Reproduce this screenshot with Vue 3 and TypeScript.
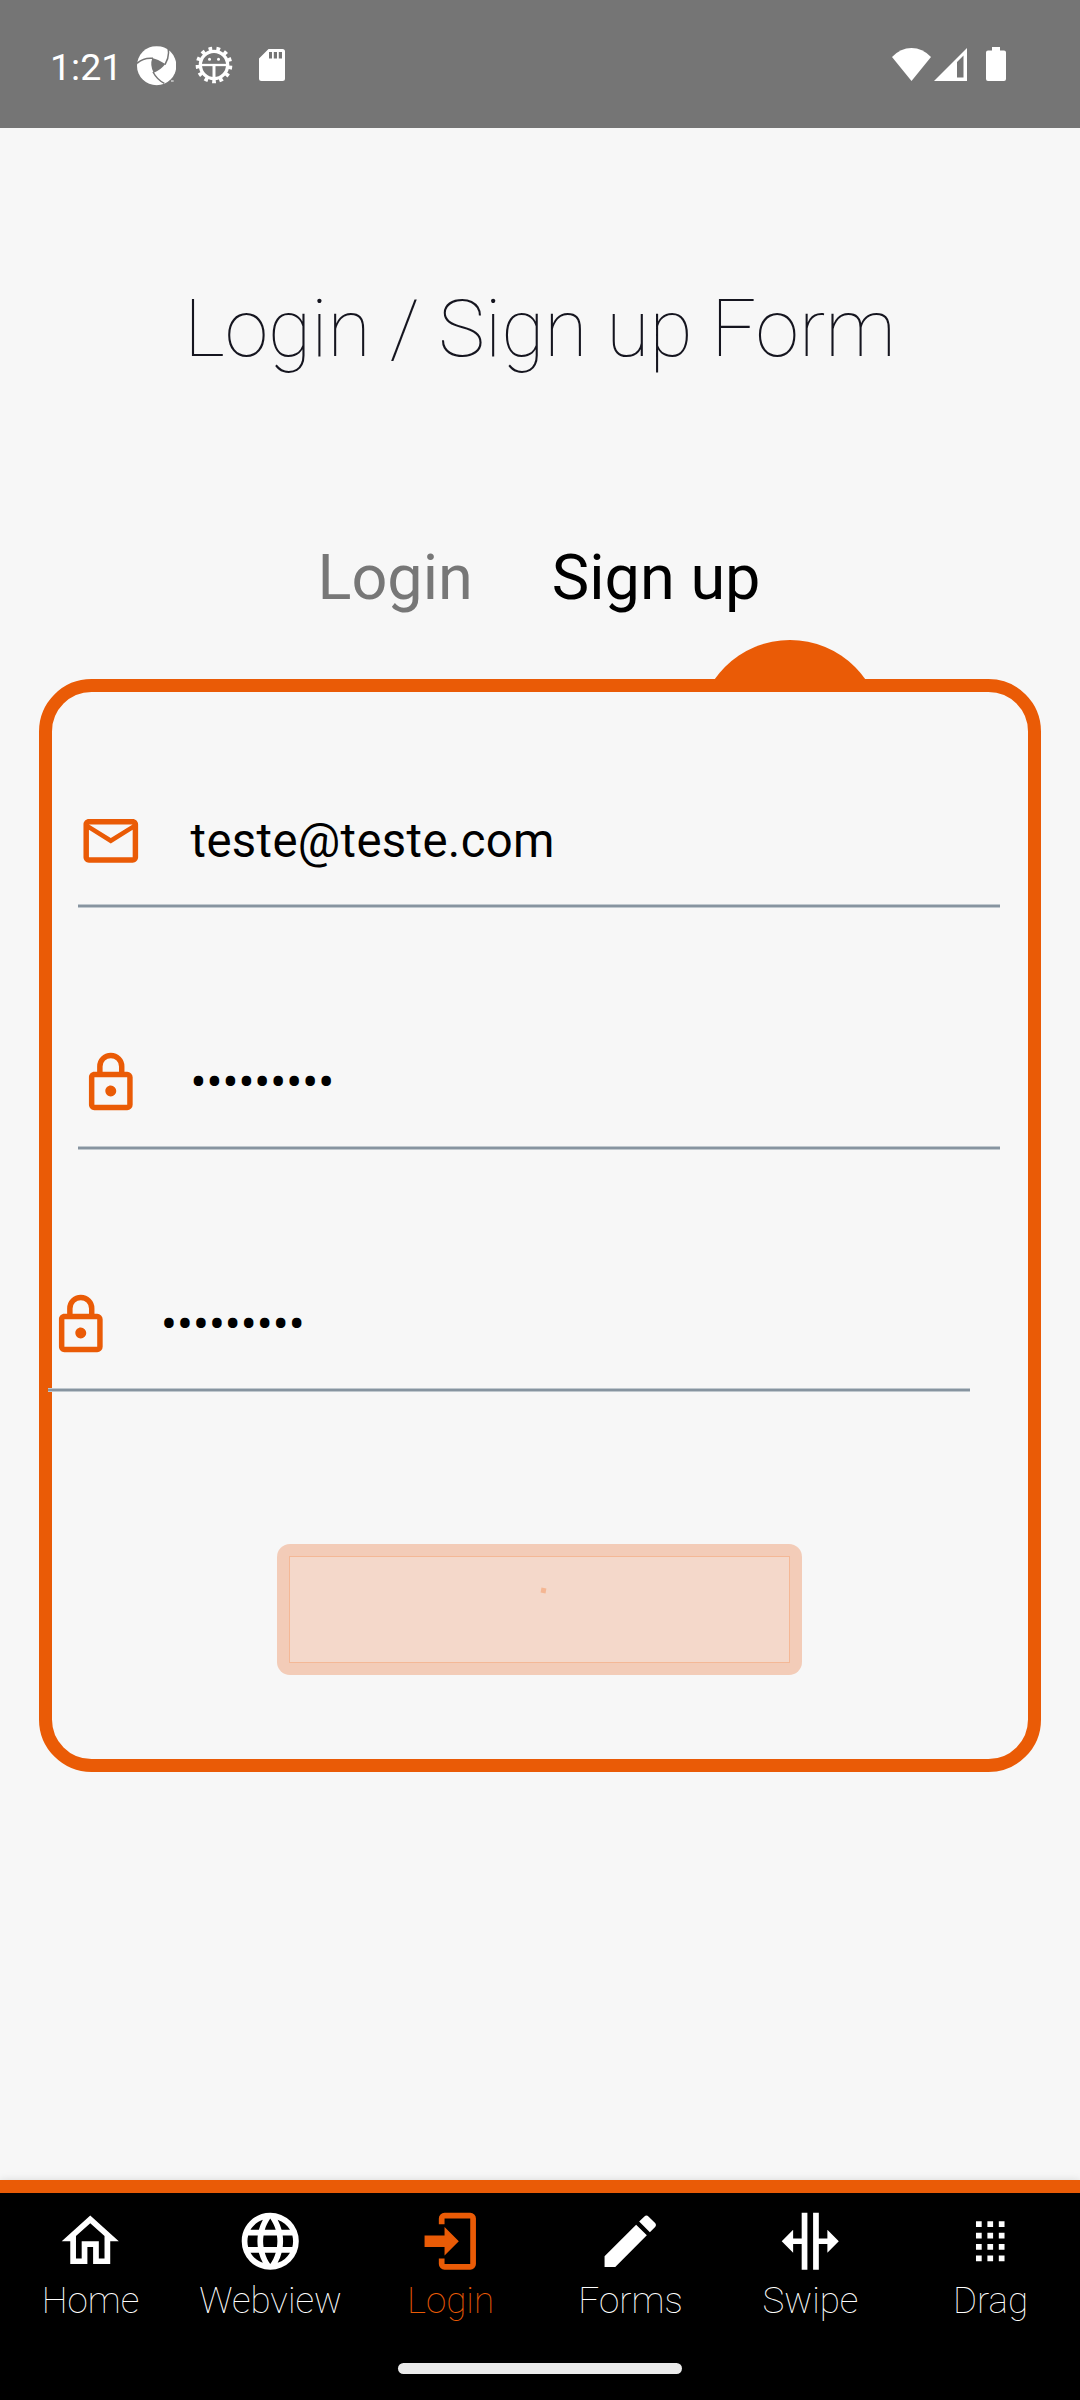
<script setup lang="ts">
import { ref } from 'vue'

interface Field {
  id: string
  icon: 'mail' | 'lock'
  value: string
  shifted: boolean
}

interface NavItem {
  label: string
  path: string
}

const mail =
  'M22 6C22 4.9 21.1 4 20 4H4C2.9 4 2 4.9 2 6V18C2 19.1 2.9 20 4 20H20C21.1 20 22 19.1 22 18V6M20 6L12 11L4 6H20M20 18H4V8L12 13L20 8V18Z'
const lock =
  'M12 17C10.89 17 10 16.1 10 15C10 13.89 10.89 13 12 13A2 2 0 0 1 14 15A2 2 0 0 1 12 17M18 20V10H6V20H18M18 8A2 2 0 0 1 20 10V20A2 2 0 0 1 18 22H6C4.89 22 4 21.1 4 20V10C4 8.89 4.89 8 6 8H7V6A5 5 0 0 1 12 1A5 5 0 0 1 17 6V8H18M12 3A3 3 0 0 0 9 6V8H15V6A3 3 0 0 0 12 3Z'

const fields: Field[] = [
  { id: 'email', icon: 'mail', value: 'teste@teste.com', shifted: false },
  { id: 'password', icon: 'lock', value: '•••••••••', shifted: false },
  { id: 'repeat', icon: 'lock', value: '•••••••••', shifted: true },
]

const navItems: NavItem[] = [
  {
    label: 'Home',
    path: 'M12 5.69L17 10.19V18H15V12H9V18H7V10.19L12 5.69M12 3L2 12H5V20H11V14H13V20H19V12H22',
  },
  {
    label: 'Webview',
    path: 'M16.36 14C16.44 13.34 16.5 12.68 16.5 12C16.5 11.32 16.44 10.66 16.36 10H19.74C19.9 10.64 20 11.31 20 12C20 12.69 19.9 13.36 19.74 14M14.59 19.56C15.19 18.45 15.65 17.25 15.97 16H18.92C17.96 17.65 16.43 18.93 14.59 19.56M14.34 14H9.66C9.56 13.34 9.5 12.68 9.5 12C9.5 11.32 9.56 10.65 9.66 10H14.34C14.43 10.65 14.5 11.32 14.5 12C14.5 12.68 14.43 13.34 14.34 14M12 19.96C11.17 18.76 10.5 17.43 10.09 16H13.91C13.5 17.43 12.83 18.76 12 19.96M8 8H5.08C6.03 6.34 7.57 5.06 9.4 4.44C8.8 5.55 8.35 6.75 8 8M5.08 16H8C8.35 17.25 8.8 18.45 9.4 19.56C7.57 18.93 6.03 17.65 5.08 16M4.26 14C4.1 13.36 4 12.69 4 12C4 11.31 4.1 10.64 4.26 10H7.64C7.56 10.66 7.5 11.32 7.5 12C7.5 12.68 7.56 13.34 7.64 14M12 4.03C12.83 5.23 13.5 6.57 13.91 8H10.09C10.5 6.57 11.17 5.23 12 4.03M18.92 8H15.97C15.65 6.75 15.19 5.55 14.59 4.44C16.43 5.07 17.96 6.34 18.92 8M12 2C6.47 2 2 6.5 2 12A10 10 0 0 0 12 22A10 10 0 0 0 22 12A10 10 0 0 0 12 2Z',
  },
  {
    label: 'Login',
    path: 'M10 17V14H3V10H10V7L15 12L10 17M10 2H19A2 2 0 0 1 21 4V20A2 2 0 0 1 19 22H10A2 2 0 0 1 8 20V18H10V20H19V4H10V6H8V4A2 2 0 0 1 10 2Z',
  },
  {
    label: 'Forms',
    path: 'M20.71 7.04C21.1 6.65 21.1 6 20.71 5.63L18.37 3.29C18 2.9 17.35 2.9 16.96 3.29L15.12 5.12L18.87 8.87M3 17.25V21H6.75L17.81 9.93L14.06 6.18L3 17.25Z',
  },
  {
    label: 'Swipe',
    path: 'M9 2H11V22H9V13H6V16L2 12L6 8V11H9V2M13 2H15V11H18V8L22 12L18 16V13H15V22H13V2Z',
  },
  {
    label: 'Drag',
    path: 'M7 5h2v2H7zM11 5h2v2h-2zM15 5h2v2h-2zM7 9h2v2H7zM11 9h2v2h-2zM15 9h2v2h-2zM7 13h2v2H7zM11 13h2v2h-2zM15 13h2v2h-2zM7 17h2v2H7zM11 17h2v2h-2zM15 17h2v2h-2z',
  },
]

const activeNav = ref('Login')
const activeTab = ref('Sign up')
</script>

<template>
  <div class="screen">
    <header class="status">
      <div class="status-left">
        <span class="clock">1:21</span>
        <svg class="swirl" viewBox="408 137 120 120">
          <defs>
            <clipPath id="swirl-clip"><rect x="408" y="138" width="117" height="118" /></clipPath>
          </defs>
          <circle cx="467" cy="196" r="59" fill="#fff" clip-path="url(#swirl-clip)" />
          <path d="M454 173Q475 178 493 191Q478 210 458 217Q446 195 454 173Z" fill="#757575" />
          <path
            d="M408 189Q428 171 456 174M500 140Q508 166 492 193M456 215Q468 238 490 249"
            fill="none"
            stroke="#757575"
            stroke-width="4.5"
          />
          <path d="M510 242h8" stroke="#fff" stroke-width="3" />
        </svg>
        <svg class="gear" viewBox="-60 -60 120 120" fill="none" stroke="#fff">
          <circle r="41" stroke-width="10" />
          <circle
            r="49"
            stroke-width="12"
            stroke-dasharray="11 12.683"
            transform="rotate(83.57)"
          />
          <path d="M-40 0H40" stroke-width="7" />
          <path d="M0 0V40" stroke-width="9" />
          <circle cx="-13.500" cy="-17" r="4.500" fill="#fff" stroke="none" />
          <circle cx="13.500" cy="-17" r="4.500" fill="#fff" stroke="none" />
        </svg>
        <svg class="sd" viewBox="0 0 26 32">
          <path
            fill="#fff"
            fill-rule="evenodd"
            d="M9.500 0H23.500A2.500 2.500 0 0 1 26 2.500V29.500A2.500 2.500 0 0 1 23.500 32H2.500A2.500 2.500 0 0 1 0 29.500V9.500ZM10 3V9.500H13V3ZM14.800 3V9.500H18V3ZM19.800 3V9.500H23V3Z"
          />
        </svg>
      </div>
      <div class="status-right">
        <svg class="wifi" viewBox="0 0 39 33">
          <path fill="#fff" d="M0 9Q8.500 0 19.500 0T39 9L19.500 33Z" />
        </svg>
        <svg class="signal" viewBox="0 0 33 33">
          <path fill="#fff" fill-rule="evenodd" d="M0 33L33 0V33ZM23 14V29.500H29.500V7.500Z" />
        </svg>
        <svg class="battery" viewBox="0 0 20 34">
          <path
            fill="#fff"
            d="M6 0H14V3.500H18A2 2 0 0 1 20 5.500V32A2 2 0 0 1 18 34H2A2 2 0 0 1 0 32V5.500A2 2 0 0 1 2 3.500H6Z"
          />
        </svg>
      </div>
    </header>

    <main class="content">
      <h1 class="title">Login / Sign up Form</h1>

      <div class="tabs">
        <button
          v-for="tab in ['Login', 'Sign up']"
          :key="tab"
          class="tab"
          :class="{ active: activeTab === tab }"
          @click="activeTab = tab"
        >
          {{ tab }}
        </button>
      </div>

      <section class="card">
        <div class="bump"><div class="bump-circle"></div></div>
        <div v-for="field in fields" :key="field.id" class="field" :class="{ shifted: field.shifted }">
          <svg class="field-icon" viewBox="0 0 24 24">
            <path :d="field.icon === 'mail' ? mail : lock" />
          </svg>
          <span class="field-value" :class="field.icon">{{ field.value }}</span>
        </div>
        <div class="submit">
          <div class="submit-inner"><span class="speck"></span></div>
        </div>
      </section>
    </main>

    <nav class="nav">
      <div class="nav-items">
        <a
          v-for="item in navItems"
          :key="item.label"
          class="nav-item"
          :class="{ active: activeNav === item.label }"
          @click="activeNav = item.label"
        >
          <svg class="nav-icon" viewBox="0 0 24 24"><path :d="item.path" /></svg>
          <span class="nav-label">{{ item.label }}</span>
        </a>
      </div>
      <div class="handle"></div>
    </nav>
  </div>
</template>

<style>
body {
  margin: 0;
  background: #f7f7f7;
}
</style>

<style scoped>
* {
  box-sizing: border-box;
}

.screen {
  display: flex;
  flex-direction: column;
  width: 1080px;
  height: 2400px;
  overflow: hidden;
  background: #f7f7f7;
  font-family: Roboto, 'Liberation Sans', sans-serif;
}

svg {
  display: block;
  flex: none;
}

.status {
  display: flex;
  justify-content: space-between;
  height: 128px;
  padding: 0 74px 0 50px;
  background: #757575;
}

.status-left,
.status-right {
  display: flex;
  align-items: center;
}

.clock {
  width: 87px;
  padding-top: 5px;
  color: #fff;
  font-size: 37.500px;
  line-height: 44px;
}

.swirl {
  width: 40px;
  height: 40px;
  margin-top: 3px;
}

.gear {
  width: 40px;
  height: 40px;
  margin: 2px 0 0 17px;
}

.sd {
  width: 26px;
  height: 32px;
  margin: 2px 0 0 25px;
}

.wifi {
  width: 39px;
  height: 33px;
  margin-right: 3px;
}

.signal {
  width: 33px;
  height: 33px;
  margin-right: 19px;
}

.battery {
  width: 20px;
  height: 34px;
}

.content {
  display: flex;
  flex: 1;
  flex-direction: column;
  align-items: center;
}

.title {
  margin: 155px 0 0;
  color: #15151f;
  font-size: 78.750px;
  font-weight: 100;
  line-height: 92px;
  white-space: nowrap;
}

.tabs {
  display: flex;
  gap: 79px;
  margin: 166px 2px 0 0;
}

.tab {
  padding: 0;
  border: 0;
  background: none;
  color: #777;
  font-family: inherit;
  font-size: 63px;
  line-height: 74px;
}

.tab.active {
  color: #000;
}

.card {
  position: relative;
  width: 1002px;
  height: 1093px;
  margin-top: 64px;
  padding: 80px 26px 0;
  border: 13px solid #ea5b06;
  border-radius: 52.500px;
}

.bump {
  position: absolute;
  top: -52px;
  left: 646px;
  width: 184px;
  height: 40px;
  overflow: hidden;
}

.bump-circle {
  width: 184px;
  height: 184px;
  border-radius: 50%;
  background: #ea5b06;
}

.field {
  position: relative;
  display: flex;
  align-items: center;
  width: 922px;
  height: 136px;
  margin-bottom: 106px;
  padding-top: 2px;
  background: linear-gradient(#c0c8ce 1px, #8794a0 1px, #8794a0 3px, #c0c8ce 3px) bottom / 100% 4px
    no-repeat;
}

.field.shifted {
  left: -30.500px;
}

.field-icon {
  width: 65.600px;
  height: 65.600px;
  fill: #ea5b06;
}

.field-value {
  margin-left: 47px;
  font-size: 47.250px;
  line-height: 56px;
}

.field-value.mail {
  letter-spacing: 0.36px;
}

.shifted .field-value {
  margin-left: 48px;
}

.submit {
  width: 525px;
  height: 131px;
  margin: 152px 0 0 199px;
  padding: 12px;
  border-radius: 13px;
  background: #f3ccb8;
}

.submit-inner {
  height: 107px;
  padding: 31px 0 0 251px;
  border: 1px solid #f4b896;
  background: #f4d8ca;
}

.speck {
  display: block;
  width: 5px;
  height: 5px;
  background: #f4b693;
  transform: rotate(10deg);
}

.nav {
  display: flex;
  flex-direction: column;
  align-items: center;
  height: 220.500px;
  border-top: 13px solid #ea5b06;
  background: #000;
  box-shadow: 0 0 8px rgba(0, 0, 0, 0.12);
}

.nav-items {
  display: flex;
  width: 1080px;
}

.nav-item {
  display: flex;
  flex: 1;
  flex-direction: column;
  align-items: center;
  height: 170px;
  padding-top: 14.500px;
  color: #fff;
}

.nav-item.active {
  color: #ea5b06;
}

.nav-icon {
  width: 68.500px;
  height: 68.500px;
  fill: currentColor;
}

.nav-label {
  margin: 3px 0 0 1px;
  font-size: 36.750px;
  font-weight: 100;
  line-height: 44px;
}

.handle {
  width: 284px;
  height: 11px;
  border-radius: 5.500px;
  background: #ebebeb;
}
</style>
